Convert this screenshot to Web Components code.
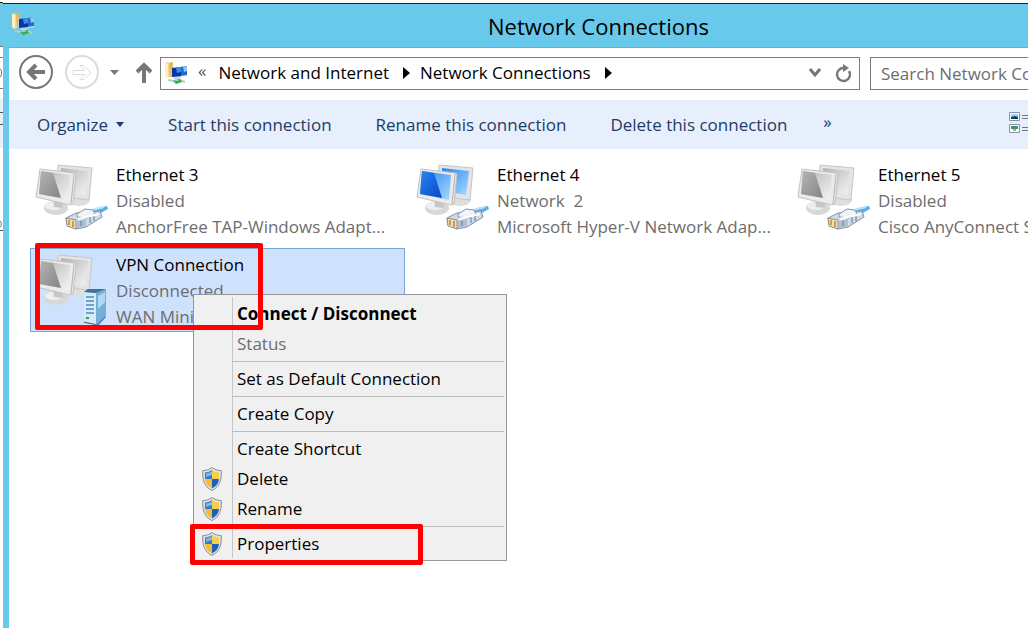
<!DOCTYPE html>
<html lang="en">
<head>
<meta charset="utf-8">
<title>Network Connections</title>
<style>
  html, body {
    height: 100%;
    margin: 0;
    overflow: hidden;
  }
  body {
    display: flex;
    background: #fff;
    color: #000;
    font: 17px/26px "Open Sans", "Noto Sans", sans-serif;
  }
</style>
</head>
<body>
<back-window></back-window>
<explorer-window caption="Network Connections">
  <nav-bar slot="nav"></nav-bar>
  <command-bar slot="commands"></command-bar>
  <connection-item kind="ethernet" name="Ethernet 3" status="Disabled" device="AnchorFree TAP-Windows Adapt..."></connection-item>
  <connection-item kind="ethernet" online name="Ethernet 4" status="Network  2" device="Microsoft Hyper-V Network Adap..."></connection-item>
  <connection-item kind="ethernet" name="Ethernet 5" status="Disabled" device="Cisco AnyConnect Secure Mobil..."></connection-item>
  <connection-item kind="vpn" selected name="VPN Connection" status="Disconnected" device="WAN Miniport (IKEv2)"></connection-item>
  <context-menu slot="overlay">
    <menu-item primary>Connect / Disconnect</menu-item>
    <menu-item disabled>Status</menu-item>
    <menu-line></menu-line>
    <menu-item>Set as Default Connection</menu-item>
    <menu-line></menu-line>
    <menu-item>Create Copy</menu-item>
    <menu-line></menu-line>
    <menu-item>Create Shortcut</menu-item>
    <menu-item shield>Delete</menu-item>
    <menu-item shield>Rename</menu-item>
    <menu-line></menu-line>
    <menu-item shield>Properties</menu-item>
  </context-menu>
  <mark-box slot="overlay" target="connection"></mark-box>
  <mark-box slot="overlay" target="properties"></mark-box>
</explorer-window>

<script>
(function () {
  // Folder with two small screens and a green cable, used in the title and address bars
  const NETWORK_ICON = `
    <svg width="24" height="24" viewBox="0 0 24 24" aria-hidden="true">
      <path d="M1 2l3-1 1 1 4-1v14l-6 2-2-2z" fill="#f3d78a"/>
      <path d="M1 2l3 1v14l-3-2z" fill="#fff0bd"/>
      <path d="M5 2l4-1v14l-3 1z" fill="#e3b65c"/>
      <path d="M15 6l8-1v10l-8 1z" fill="#dfeaf5"/>
      <path d="M16 6l7-1v9l-7 1z" fill="#2468d0"/>
      <path d="M19 6l4-1v5l-3 1z" fill="#8fc4f6"/>
      <path d="M7 7l10-1v11l-10-1z" fill="#b9cfe6"/>
      <path d="M8 7l9-1v9l-9 1z" fill="#0a36a4"/>
      <path d="M12 7l5-1v5l-4 1z" fill="#3c8ceb"/>
      <path d="M9 16l7 1v2h-5z" fill="#c6d4df"/>
      <path d="M4 19l6 1 6-1 5 2" fill="none" stroke="#b5cfc0" stroke-width="2"/>
      <path d="M9 20l7-2 2 3-6 2z" fill="#2eae4e"/>
      <path d="M11 20l4-1" stroke="#9be5a8"/>
    </svg>`;

  function define(name, html, setup) {
    const template = document.createElement("template");
    template.innerHTML = html;
    customElements.define(name, class extends HTMLElement {
      connectedCallback() {
        if (this.shadowRoot) return;
        this.attachShadow({ mode: "open" });
        this.shadowRoot.appendChild(template.content.cloneNode(true));
        if (setup) setup(this, this.shadowRoot);
      }
    });
  }

  // Edge of the window that lies behind
  define("back-window", `
    <style>
      :host {
        display: block;
        flex: 0 0 3px;
        overflow: hidden;
      }
      .title { height: 43px; border-top: 1px solid #222; margin-top: 2px; background: #68c9ea; border-bottom: 1px solid #777; }
      .nav { height: 52px; display: flex; align-items: center; }
      .field { width: 3px; height: 30px; border: solid #777; border-width: 1px 0; overflow: hidden; }
      .bar { height: 49px; background: #e7effd; display: flex; align-items: center; }
      .lines { width: 3px; height: 11px; border: solid #555; border-width: 1px 0; margin-bottom: 10px; }
      .edge { height: 10px; padding-top: 72px; border-bottom: 1px solid #555; }
      .ring { width: 10px; height: 12px; margin: 9px 0 0 -8px; border: 1px solid #777; border-radius: 5px; box-sizing: border-box; }
      .edge .ring { margin-top: 0; height: 8px; border-color: #4684b8; }
    </style>
    <div class="title"></div>
    <div class="nav"><div class="field"><div class="ring"></div></div></div>
    <div class="bar"><div class="lines"></div></div>
    <div class="edge"><div class="ring"></div></div>
  `);

  // The window is wider than the screen and runs off its right edge
  define("explorer-window", `
    <style>
      :host {
        display: flex;
        flex-direction: column;
        flex: 1 0 auto;
        width: calc(100% + 147px);
        box-sizing: border-box;
        border-top: 1px solid #222;
        margin-top: 3px;
      }
      header {
        display: flex;
        align-items: center;
        height: 43px;
        background: #68c9ea;
      }
      header svg { margin: 0 0 4px 8px; }
      h1 {
        flex: 1;
        margin: 0 16px 0 0;
        text-align: center;
        font-size: 22px;
        line-height: 32px;
        font-weight: 400;
      }
      .body {
        flex: 1;
        border-left: 6px solid #68c9ea;
        background: #fff;
      }
      main { position: relative; }
      .list {
        display: grid;
        grid-template-columns: repeat(auto-fill, 375px);
        gap: 6px;
        padding: 9px 0 0 21px;
      }
    </style>
    <header>${NETWORK_ICON}<h1></h1></header>
    <div class="body">
      <slot name="nav"></slot>
      <slot name="commands"></slot>
      <main>
        <div class="list"><slot></slot></div>
        <slot name="overlay"></slot>
      </main>
    </div>
  `, (host, root) => {
    root.querySelector("h1").textContent = host.getAttribute("caption");
  });

  define("nav-bar", `
    <style>
      :host {
        display: flex;
        align-items: center;
        height: 53px;
        padding: 0 10px 2px 9px;
        border-top: 1px solid #7fa9b9;
        box-sizing: border-box;
      }
      button {
        display: block;
        flex: none;
        padding: 0;
        border: 0;
        background: none;
        font: inherit;
      }
      svg { display: block; }
      .back, .forward { margin-bottom: 2px; }
      .forward { margin-left: 10px; }
      .recent { margin-left: 10px; }
      .up { margin: 0 7px 0 16px; }
      .address, input {
        box-sizing: border-box;
        height: 33px;
        border: 1px solid #7d7d7d;
        background: #fff;
      }
      .address {
        flex: 1;
        display: flex;
        align-items: center;
        padding: 0 7px 0 3px;
        margin-right: 10px;
      }
      .address > svg { flex: none; }
      .more { margin: 0 12px 4px 10px; color: #555; }
      .arrow { margin: 0 10px 0 14px; }
      a { color: #000; text-decoration: none; white-space: nowrap; }
      .drop { margin: 0 14px 0 auto; }
      input {
        width: 298px;
        padding: 0 10px;
        border-radius: 0;
        font: inherit;
        color: #000;
      }
      input::placeholder { color: #6d6d6d; opacity: 1; }
    </style>
    <button class="back" aria-label="Back">
      <svg width="36" height="36" viewBox="0 0 36 36"><circle cx="18" cy="18" r="16" fill="none" stroke="#777" stroke-width="2"/><path d="M27 18H11M18 11l-7 7 7 7" fill="none" stroke="#777" stroke-width="4"/></svg>
    </button>
    <button class="forward" aria-label="Forward">
      <svg width="36" height="36" viewBox="0 0 36 36"><circle cx="18" cy="18" r="16" fill="none" stroke="#dcdcdc" stroke-width="2"/><path d="M9 16.500h12l-5-5h4l7 7-7 7h-4l5-5H9z" fill="#fff" stroke="#dcdcdc"/></svg>
    </button>
    <button class="recent" aria-label="Recent locations">
      <svg width="9" height="6" viewBox="0 0 9 6"><path d="M0 0h9L4.500 5z" fill="#777"/></svg>
    </button>
    <button class="up" aria-label="Up">
      <svg width="18" height="22" viewBox="0 0 18 22"><path d="M9 21V4M2 10l7-7 7 7" fill="none" stroke="#777" stroke-width="4"/></svg>
    </button>
    <div class="address">
      ${NETWORK_ICON}
      <span class="more">«</span>
      <a href="#">Network and Internet</a>
      <svg class="arrow" width="7" height="12" viewBox="0 0 7 12"><path d="M0 0l7 6-7 6z"/></svg>
      <a href="#">Network Connections</a>
      <svg class="arrow" width="7" height="12" viewBox="0 0 7 12"><path d="M0 0l7 6-7 6z"/></svg>
      <button class="drop" aria-label="Previous locations">
        <svg width="12" height="10" viewBox="0 0 12 10"><path d="M1 1l5 6 5-6" fill="none" stroke="#777" stroke-width="3"/></svg>
      </button>
      <button aria-label="Refresh">
        <svg width="17" height="19" viewBox="0 0 17 19"><path d="M14 7a6.500 6.500 0 1 1-5-3" fill="none" stroke="#777" stroke-width="2.400"/><path d="M8 0l6 4-6 4z" fill="#777"/></svg>
      </button>
    </div>
    <input type="search" placeholder="Search Network Connections" aria-label="Search Network Connections">
  `);

  define("command-bar", `
    <style>
      :host {
        display: flex;
        align-items: center;
        gap: 36px;
        height: 49px;
        padding: 0 147px 0 28px;
        background: #e7effd;
        color: #1e3c63;
      }
      button {
        display: flex;
        align-items: center;
        gap: 8px;
        flex: none;
        padding: 0;
        border: 0;
        background: none;
        font: inherit;
        color: inherit;
      }
      .wide { margin-right: 8px; }
      .overflow { padding-bottom: 6px; }
      .view { margin-left: auto; padding-bottom: 4px; }
    </style>
    <button class="wide">Organize
      <svg width="8" height="5" viewBox="0 0 8 5"><path d="M0 0h8L4 5z" fill="#1e3c63"/></svg>
    </button>
    <button class="wide">Start this connection</button>
    <button class="wide">Rename this connection</button>
    <button>Delete this connection</button>
    <button class="overflow" aria-label="More commands">»</button>
    <button class="view" aria-label="Change your view">
      <svg width="22" height="24" viewBox="0 0 22 24">
        <path d="M.500 1.500h10v8h-10zM.500 13.500h10v8h-10z" fill="#fff" stroke="#8795ab"/>
        <path d="M2 3h7v3H2z" fill="#9ed4f0"/><path d="M2 6l4-1 3 1v2H2z" fill="#123f66"/>
        <path d="M2 15h4v3H2z" fill="#38a051"/><path d="M6 15h3v3H6z" fill="#3c7fd0"/><path d="M4 18h3v2H4z" fill="#e0a23c"/>
        <path d="M13 4.500h9M13 7.500h9M13 16.500h9M13 19.500h9" stroke="#777"/>
      </svg>
    </button>
  `);

  const CABLE = `
    <g transform="translate(4 2)">
      <path d="M52 52l9-5 11-2 1 3-9 5-8 5z" fill="#5aaee9"/>
      <path d="M57 49l12-3" stroke="#b9e1fa" stroke-width="2"/>
      <path d="M31 57l10-5 24-2 2 6-16 10-10 2-9-4z" fill="#cfdbe8" stroke="#8192a6"/>
      <path d="M42 53l8-5 8 1 2 4-8 4-10-1z" fill="#eef4fa" stroke="#8595a9"/>
      <path d="M31 57l10 2v9l-9-3z" fill="#ecdfbd" stroke="#8b8f94"/>
      <path d="M34 59v5M38 60v6" stroke="#d99a3a" stroke-width="2"/>
      <path d="M42 60l9-2v7l-9 2z" fill="#aebfd2"/>
      <path d="M46 60v5M55 56v6M59 54v6" stroke="#64798f"/>
      <path d="M43 58l21-5" stroke="#fff" stroke-width="2"/>
    </g>`;

  const SERVER = `
    <g transform="translate(3 6)">
      <path d="M50 37l4-3h18v28l-7 8-15-2z" fill="#5f9bc9"/>
      <path d="M50 37l12 1v31l-12-2z" fill="#d6eaf8"/>
      <path d="M50 37l4-3h18l-10 4z" fill="#40749f"/>
      <path d="M62 38l10-4v28l-7 8-3-1z" fill="#76aeda"/>
      <path d="M64 41l7-4v10l-7 7z" fill="#b3d7ef"/>
      <path d="M52 42h8M52 46h8M52 50h8M52 54h8M52 58h8" stroke="#6ba6d0" stroke-width="2"/>
      <path d="M52 63h3" stroke="#2e9d66" stroke-width="2"/>
      <path d="M50 67l13 3 8-8" fill="none" stroke="#56697a"/>
    </g>`;

  function computers(kind, online) {
    const dark = online ? "#0846c8" : "#858585";
    const mid = online ? "#2a86f0" : "#b4b4b4";
    const light = online ? "#a5daff" : "#f4f4f4";
    return `
      <svg width="80" height="84" viewBox="0 0 80 84" aria-hidden="true">
        <defs>
          <linearGradient id="glass" x1="0" y1="0" x2="1" y2="1">
            <stop offset="0" stop-color="${mid}"/>
            <stop offset="1" stop-color="${dark}"/>
          </linearGradient>
          <linearGradient id="shine" x1="0" y1="0" x2="1" y2="1">
            <stop offset="0" stop-color="${mid}"/>
            <stop offset="1" stop-color="${light}"/>
          </linearGradient>
        </defs>
        <ellipse cx="48" cy="41" rx="11" ry="6" fill="#dedede"/>
        <path d="M27 6l34 3-3 32-9-1-23-5z" fill="#e4e4e4" stroke="#c6c6c6"/>
        <path d="M30 9l27 3-3 24-24-4z" fill="url(#shine)"/>
        <ellipse cx="25" cy="49" rx="12" ry="7" fill="#d8d8d8"/>
        <ellipse cx="23" cy="47" rx="9" ry="4" fill="#efefef"/>
        <path d="M22 39l9 2 1 8-9-1z" fill="#c6c6c6"/>
        <path d="M9 10l34 4 2 1-3 30-3 1-34-8z" fill="#ebebeb" stroke="#c2c2c2"/>
        <path d="M10 12l29 4-2 25-29-6z" fill="url(#shine)"/>
        <path d="M10 12l12 2 8 25-22-4z" fill="url(#glass)"/>
        <path d="M43 15l-3 30" stroke="#b4b4b4"/>
        ${kind === "vpn" ? SERVER : CABLE}
      </svg>`;
  }

  define("connection-item", `
    <style>
      :host {
        display: grid;
        grid-template-columns: 80px 1fr;
        column-gap: 5px;
        box-sizing: border-box;
        height: 84px;
        border: 1px solid transparent;
        overflow: hidden;
      }
      :host([selected]) {
        background: #cfe2fd;
        border-color: #7ba3d6;
      }
      .text { padding-top: 3px; color: #6d6d6d; }
      .text div { white-space: pre; }
      .text .name { color: #000; }
    </style>
    <div class="icon"></div>
    <div class="text">
      <div class="name"></div>
      <div class="status"></div>
      <div class="device"></div>
    </div>
  `, (host, root) => {
    root.querySelector(".icon").innerHTML = computers(host.getAttribute("kind"), host.hasAttribute("online"));
    ["name", "status", "device"].forEach((key) => {
      root.querySelector("." + key).textContent = host.getAttribute(key);
    });
  });

  define("context-menu", `
    <style>
      :host {
        position: absolute;
        left: 184px;
        top: 145px;
        width: 314px;
        box-sizing: border-box;
        padding: 4px 2px 1px;
        border: 1px solid #979797;
        background: linear-gradient(#c5c5c5, #c5c5c5) 38px 2px / 1px calc(100% - 4px) no-repeat #f0f0f0;
      }
    </style>
    <div role="menu"><slot></slot></div>
  `);

  define("menu-item", `
    <style>
      :host { display: block; }
      button {
        display: grid;
        grid-template-columns: 31px 1fr;
        column-gap: 10px;
        align-items: center;
        width: 100%;
        height: 30px;
        padding: 0;
        border: 0;
        background: none;
        font: inherit;
        color: #000;
        text-align: left;
      }
      svg { display: none; margin-left: 6px; }
      :host([primary]) button { font-weight: 700; }
      :host([disabled]) button { color: #6d6d6d; }
      :host([shield]) svg { display: block; }
    </style>
    <button role="menuitem">
      <span>
        <svg width="20" height="24" viewBox="0 0 20 24" aria-hidden="true">
          <path d="M10 .500C7.500 2.500 4 3.500.700 3.700.500 13 2 19.500 10 23.500c8-4 9.500-10.500 9.300-19.800C16 3.500 12.500 2.500 10 .500z" fill="#dfe2e4" stroke="#8a8f93"/>
          <path d="M10 3C8 4.500 5.500 5.300 3 5.500V12h7z" fill="#2e7ccb"/>
          <path d="M10 3c2 1.500 4.500 2.300 7 2.500V12h-7z" fill="#f8cf4a"/>
          <path d="M3 12c.300 4 2.500 7.200 7 9.500V12z" fill="#f5bd35"/>
          <path d="M17 12c-.300 4-2.500 7.200-7 9.500V12z" fill="#1e62b5"/>
          <path d="M4 6.500c2-.300 4-.900 6-2.200V8L4 10z" fill="#7bb7ec"/>
        </svg>
      </span>
      <span><slot></slot></span>
    </button>
  `, (host, root) => {
    root.querySelector("button").disabled = host.hasAttribute("disabled");
  });

  define("menu-line", `
    <style>
      :host {
        display: block;
        height: 1px;
        margin: 2px 0 2px 36px;
        background: #bdbdbd;
      }
    </style>
  `);

  define("mark-box", `
    <style>
      :host {
        position: absolute;
        box-sizing: border-box;
        border: 5px solid #f00;
        border-radius: 2px;
        pointer-events: none;
      }
      :host([target="connection"]) { left: 26px; top: 94px; width: 228px; height: 87px; }
      :host([target="properties"]) { left: 181px; top: 375px; width: 233px; height: 41px; }
    </style>
  `);
})();
</script>
</body>
</html>
